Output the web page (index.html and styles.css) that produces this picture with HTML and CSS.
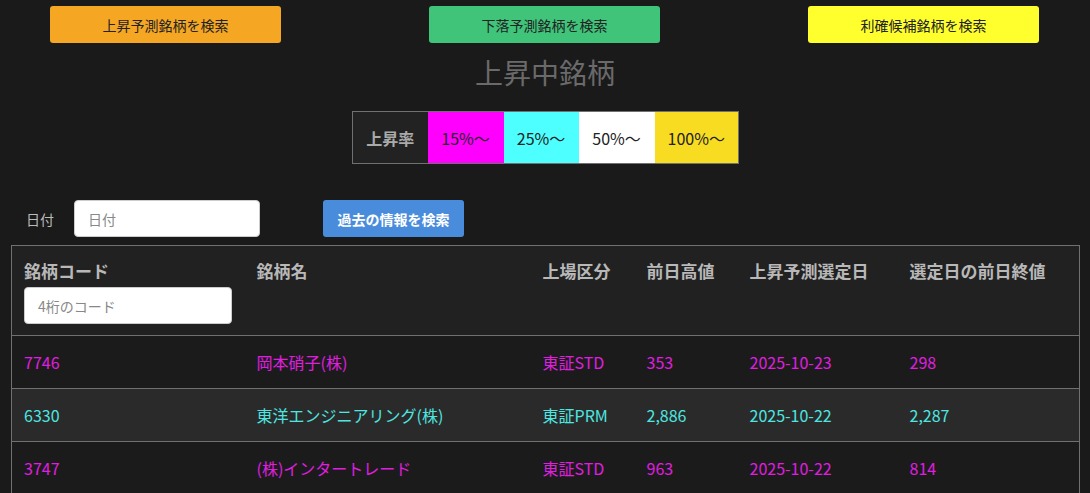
FILE: index.html
```html
<!DOCTYPE html>
<html lang="ja">
<head>
<meta charset="utf-8">
<title>上昇中銘柄</title>
<link rel="stylesheet" href="styles.css">
</head>
<body>
<div class="nav">
  <button class="nav-btn orange">上昇予測銘柄を検索</button>
  <button class="nav-btn green">下落予測銘柄を検索</button>
  <button class="nav-btn yellow">利確候補銘柄を検索</button>
</div>
<h1 class="title">上昇中銘柄</h1>
<div class="legend-wrap">
  <table class="legend">
    <tr>
      <th class="lg-head">上昇率</th>
      <td class="lg lg-m">15%～</td>
      <td class="lg lg-c">25%～</td>
      <td class="lg lg-w">50%～</td>
      <td class="lg lg-y">100%～</td>
    </tr>
  </table>
</div>
<div class="search">
  <label class="date-label">日付</label>
  <input class="date-input" type="text" placeholder="日付">
  <button class="search-btn">過去の情報を検索</button>
</div>
<table class="stocks">
  <colgroup>
    <col class="c1"><col class="c2"><col class="c3"><col class="c4"><col class="c5"><col class="c6">
  </colgroup>
  <thead>
    <tr>
      <th>銘柄コード<input class="code-input" type="text" placeholder="4桁のコード"></th>
      <th>銘柄名</th>
      <th>上場区分</th>
      <th>前日高値</th>
      <th>上昇予測選定日</th>
      <th>選定日の前日終値</th>
    </tr>
  </thead>
  <tbody>
    <tr class="mag">
      <td>7746</td><td>岡本硝子(株)</td><td>東証STD</td><td>353</td><td>2025-10-23</td><td>298</td>
    </tr>
    <tr class="cyan alt">
      <td>6330</td><td>東洋エンジニアリング(株)</td><td>東証PRM</td><td>2,886</td><td>2025-10-22</td><td>2,287</td>
    </tr>
    <tr class="mag">
      <td>3747</td><td>(株)インタートレード</td><td>東証STD</td><td>963</td><td>2025-10-22</td><td>814</td>
    </tr>
  </tbody>
</table>
</body>
</html>
```
FILE: styles.css
```css
* { box-sizing: border-box; }
html, body {
  margin: 0;
  background: #1a1a1a;
  font-family: "Noto Sans CJK JP", "Noto Sans", sans-serif;
  color: #bbb;
}
body { padding: 6px 11px 0 11px; }

.nav {
  display: flex;
  justify-content: space-between;
  padding: 0 40px 0 39px;
}
.nav-btn {
  width: 231px;
  height: 37px;
  border: none;
  border-radius: 3px;
  font-family: inherit;
  font-size: 14px;
  color: #222;
  padding: 0;
}
.orange { background: #f5a623; }
.green { background: #3fc47a; }
.yellow { background: #ffff2e; }

.title {
  margin: 7px 0 0 0;
  height: 61px;
  line-height: 44px;
  text-align: center;
  font-size: 28px;
  font-weight: normal;
  color: #6a6a6a;
}

.legend-wrap { display: flex; justify-content: center; padding-left: 1px; }
.legend {
  border-collapse: collapse;
  border: 1px solid #707070;
  height: 53px;
}
.legend th, .legend td {
  padding: 0;
  text-align: center;
  font-size: 16px;
  color: #222;
  font-weight: normal;
}
.lg-head { width: 75px; background: #222; color: #aaa !important; font-weight: bold !important; }
.lg-m { width: 76px; background: #ff00ff; }
.lg-c { width: 75px; background: #4dffff; }
.lg-w { width: 76px; background: #ffffff; }
.lg-y { width: 84px; background: #f8dc22; }

.search {
  display: flex;
  align-items: center;
  margin-top: 36px;
  height: 37px;
  padding-left: 15px;
}
.date-label { font-size: 14px; color: #bbb; width: 48px; }
.date-input, .code-input {
  height: 37px;
  border: 1px solid #ccc;
  border-radius: 4px;
  background: #fff;
  padding: 0 13px;
  font-family: inherit;
  font-size: 14px;
  color: #333;
}
.date-input { width: 186px; }
.date-input::placeholder, .code-input::placeholder { color: #888; }
.search-btn {
  margin-left: 63px;
  width: 141px;
  height: 37px;
  border: none;
  border-radius: 3px;
  background: #4a8cdc;
  color: #fff;
  font-family: inherit;
  font-size: 14px;
  font-weight: bold;
  padding: 0;
}

.stocks {
  margin-top: 8px;
  width: 1069px;
  border-collapse: collapse;
  table-layout: fixed;
  border: 1px solid #707070;
}
.c1 { width: 233px; }
.c2 { width: 286px; }
.c3 { width: 104px; }
.c4 { width: 103px; }
.c5 { width: 160px; }
.c6 { width: auto; }
.stocks thead tr { background: #212121; height: 90px; }
.stocks th {
  vertical-align: top;
  text-align: left;
  padding: 12px 12px 0 12px;
  font-size: 17px;
  font-weight: bold;
  color: #b8b8b8;
  line-height: 26px;
}
.code-input {
  display: block;
  width: 208px;
  margin-top: 3px;
  font-weight: normal;
}
.stocks td {
  border-top: 1px solid #707070;
  height: 53px;
  padding: 0 12px;
  font-size: 16px;
  vertical-align: middle;
}
.stocks tbody tr { background: #1b1b1b; }
.stocks tbody tr.alt { background: #2a2a2a; }
.mag td { color: #e01ee0; }
.cyan td { color: #4ee6e0; }
```
